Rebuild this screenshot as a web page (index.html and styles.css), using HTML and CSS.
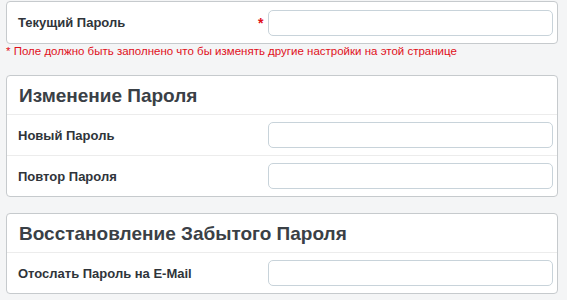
FILE: index.html
```html
<!DOCTYPE html>
<html lang="ru">
<head>
    <meta charset="UTF-8"/>
    <title>Настройки пароля</title>
    <link rel="stylesheet" href="styles.css">
</head>
<body>
<div class="page">
    <div class="card card-first">
        <div class="row">
            <label for="current">Текущий Пароль</label>
            <span class="required">*</span>
            <input type="password" id="current" />
        </div>
    </div>
    <p class="hint">* Поле должно быть заполнено что бы изменять другие настройки на этой странице</p>

    <div class="card">
        <h3 class="card-title">Изменение Пароля</h3>
        <div class="row">
            <label for="newpass">Новый Пароль</label>
            <span></span>
            <input type="password" id="newpass" />
        </div>
        <div class="row">
            <label for="repeat">Повтор Пароля</label>
            <span></span>
            <input type="password" id="repeat" />
        </div>
    </div>

    <div class="card">
        <h3 class="card-title">Восстановление Забытого Пароля</h3>
        <div class="row">
            <label for="mail">Отослать Пароль на E-Mail</label>
            <span></span>
            <input type="text" id="mail" />
        </div>
    </div>
</div>
</body>
</html>
```

FILE: styles.css
```css
body {
    background-color: #f4f5f6;
    font-family: "Liberation Sans", Arial, sans-serif;
    color: #2f343a;
    margin: 0;
}
.page {
    padding: 1px 9px 0 6px;
}
.card {
    background-color: #fff;
    border: 1px solid #c6cacd;
    border-radius: 4px;
    margin-bottom: 16px;
}
.card-first {
    margin-bottom: 0;
}
.card-first .row {
    height: 41px;
}
.card-title {
    margin: 0;
    padding: 0 12px;
    height: 38px;
    line-height: 40px;
    font-size: 19px;
    font-weight: bold;
    color: #3a4046;
    border-bottom: 1px solid #ececec;
}
.row {
    display: grid;
    grid-template-columns: 1fr 10px 285px;
    align-items: center;
    height: 40px;
    padding: 0 4px 0 11px;
    border-bottom: 1px solid #ececec;
}
.row:last-child {
    border-bottom: none;
}
label {
    font-size: 13px;
    font-weight: bold;
}
.required {
    color: #e0101a;
    font-size: 14px;
    font-weight: bold;
}
input {
    box-sizing: border-box;
    height: 26px;
    border: 1px solid #c8d3da;
    border-radius: 5px;
    background: #fff;
    outline: none;
}
.hint {
    margin: 0;
    padding-top: 1px;
    height: 30px;
    line-height: 13px;
    font-size: 11.5px;
    color: #e0101a;
}
```
